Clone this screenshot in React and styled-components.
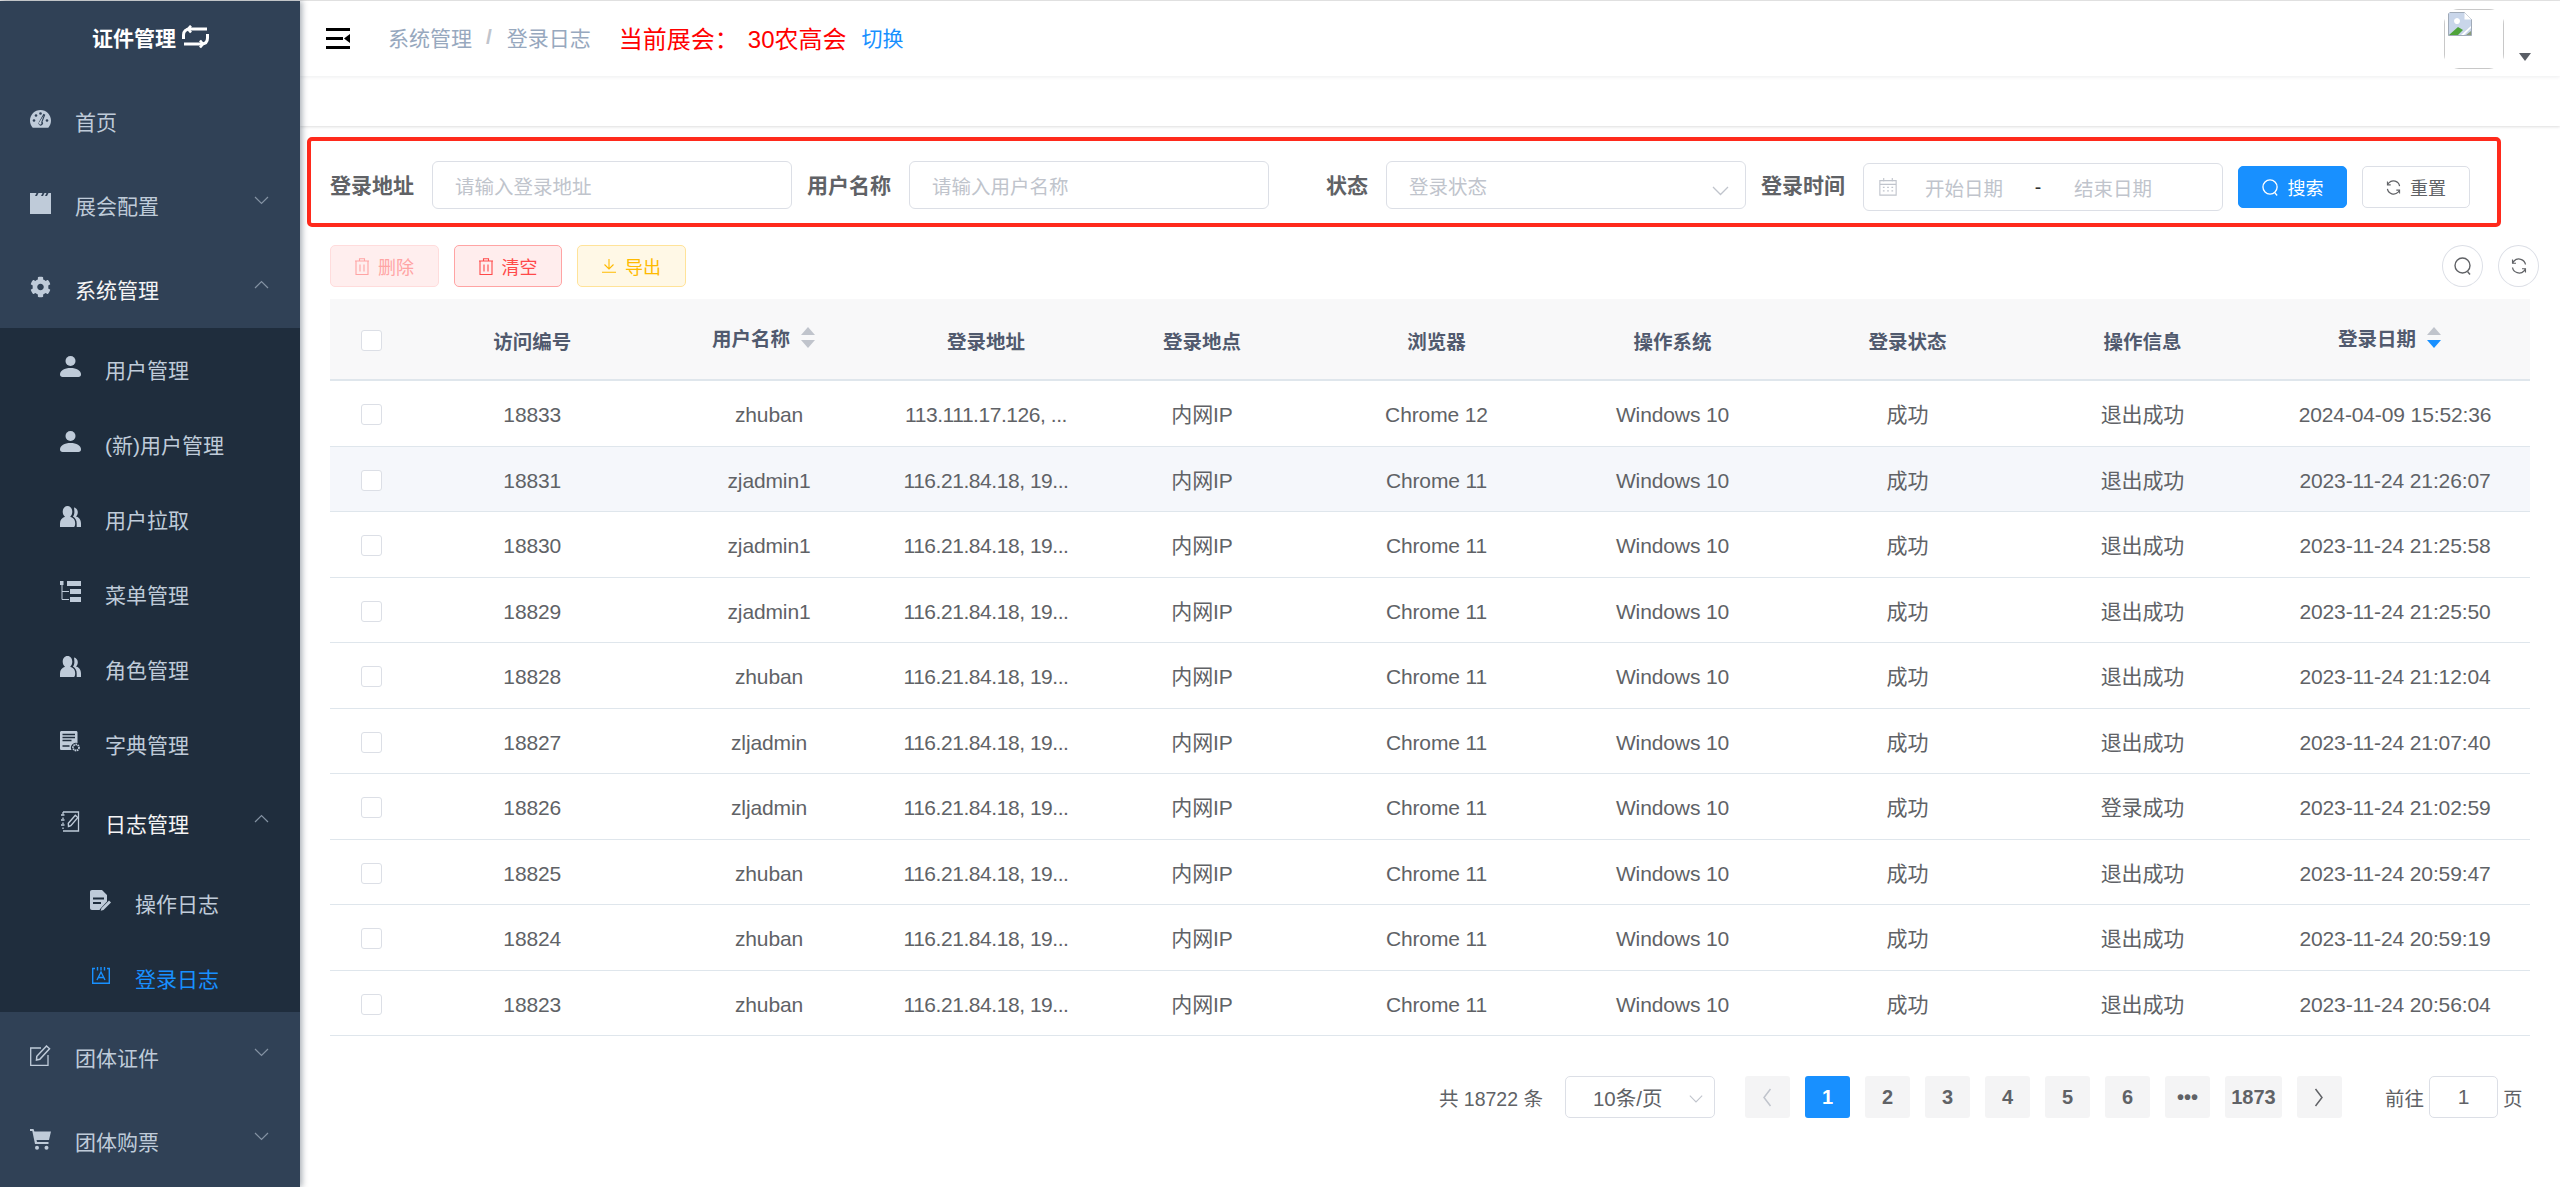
import React from "react";
import styled, { createGlobalStyle } from "styled-components";
import { FaCog } from "react-icons/fa";

const Global = createGlobalStyle`
  html, body { margin: 0; padding: 0; background: #fff; }
  body { font-family: "Liberation Sans", "Noto Sans CJK SC", sans-serif; font-size: 21px; color: #606266; }
  * { box-sizing: border-box; }
`;

const Page = styled.div`
  width: 2560px; height: 1187px; overflow: hidden;
  display: flex; flex-direction: column; background: #fff;
`;
const Hairline = styled.div`height: 1px; background: #e4e4e4; flex: none;`;
const Body = styled.div`display: flex; flex: 1; min-height: 0;`;

/* ---------- sidebar ---------- */
const Sidebar = styled.aside`
  width: 300px; flex: none; background: #304156;
  box-shadow: 2px 0 6px rgba(0, 21, 41, .35); position: relative; z-index: 2;
`;
const Logo = styled.div`
  height: 75px; display: flex; align-items: center; justify-content: center; gap: 6px;
  color: #fff; font-weight: 700; font-size: 21px; padding: 0 0 3px 1px;
`;
const SubMenu = styled.div`background: #1f2d3d;`;
const Item = styled.div`
  height: ${p => (p.$tall ? 84 : 75)}px;
  padding-left: ${p => 30 + p.$level * 30}px; padding-right: 31px;
  display: flex; align-items: center; position: relative;
  color: ${p => (p.$active ? "#1890ff" : p.$open ? "#f4f4f5" : "#bfcbd9")};
`;
const ItemIcon = styled.span`
  width: 21px; height: 21px; flex: none; margin-right: 24px; margin-top: 2px;
  display: flex; align-items: center; justify-content: center;
  color: ${p => (p.$active ? "#1890ff" : "#bfcbd9")};
  svg { display: block; }
`;
const ItemLabel = styled.span`flex: 1; padding-top: 6px; white-space: nowrap;`;
const Chevron = styled.svg`width: 15px; height: 9px; flex: none; margin-top: -4px; color: #8492a3;`;

/* ---------- right side ---------- */
const Main = styled.main`flex: 1; min-width: 0; display: flex; flex-direction: column;`;
const Navbar = styled.header`
  height: 75px; flex: none; display: flex; align-items: center; padding: 0 0 3px 26px;
  box-shadow: 0 1px 4px rgba(0, 21, 41, .08); position: relative; z-index: 1; background: #fff;
`;
const Hamburger = styled.svg`width: 24px; height: 21px; flex: none; margin: 3px 38px 0 0;`;
const Crumb = styled.span`color: #97a8be; white-space: nowrap;`;
const CrumbSep = styled.span`color: #c0c4cc; font-weight: 700; margin: 0 15px 0 14px;`;
const Exhibition = styled.span`color: #f00; font-size: 24px; margin-left: 28px; white-space: nowrap;`;
const ExhibitionName = styled.span`margin-left: 9px;`;
const SwitchLink = styled.span`color: #1890ff; margin-left: 15px; white-space: nowrap;`;
const NavRight = styled.div`margin-left: auto; display: flex; align-items: flex-start; padding-right: 29px; align-self: stretch; padding-top: 8px;`;
const Avatar = styled.div`width: 60px; height: 60px; border-radius: 15px; overflow: hidden; background: #fff;`;
const AvatarInner = styled.div`width: 100%; height: 100%; border: 1px solid #c8c8c8; padding: 2px 0 0 3px;`;
const Caret = styled.span`
  width: 0; height: 0; margin: 44px 0 0 15px;
  border-left: 6px solid transparent; border-right: 6px solid transparent; border-top: 8px solid #5a5e66;
`;
const TagsBar = styled.div`
  height: 50px; flex: none; background: #fff;
  box-shadow: 0 1px 3px 0 rgba(0, 0, 0, .12), 0 0 3px 0 rgba(0, 0, 0, .04);
`;

const SearchBox = styled.form`
  width: 2194px; height: 90px; margin: 11px 0 0 7px; flex: none;
  border: 4px solid #ff2a1c; border-radius: 5px;
  padding: 20px 0 0 19px; display: flex; align-items: flex-start;
`;
const FieldLabel = styled.label`
  width: 102px; flex: none; padding-right: 18px; text-align: right; margin-top: 1px;
  font-weight: 700; line-height: 48px; color: #606266; white-space: nowrap;
`;
const Field = styled.div`
  width: 360px; height: 48px; flex: none; margin-right: 15px; margin-top: ${p => p.$top || 0}px;
  border: 1px solid #dcdfe6; border-radius: 6px; padding: 0 22px; font-size: 19.5px;
  display: flex; align-items: center; color: #c0c4cc; position: relative; white-space: nowrap;
`;
const SelectArrow = styled.svg`position: absolute; right: 16px; top: 24px; width: 17px; height: 10px; color: #c0c4cc;`;
const CalIcon = styled.svg`width: 18px; height: 18px; flex: none; margin-left: -7px; color: #c0c4cc;`;
const RangeText = styled.span`width: 78px; margin-left: ${p => p.$ml}px; text-align: center;`;
const RangeDash = styled.span`color: #303133; width: 30px; text-align: center; margin: 0 21px 0 20px;`;
const Btn = styled.button`
  height: 42px; width: ${p => p.$w}px; flex: none; padding: 0;
  border: 1px solid ${p => p.$border}; border-radius: 5px;
  background: ${p => p.$bg}; color: ${p => p.$fg};
  font: inherit; font-size: 18px; display: inline-flex; align-items: center; justify-content: center; gap: 9px;
  svg { display: block; }
`;
const SearchBtnWrap = styled.div`display: flex; gap: 15px; margin-top: 5px;`;

const Toolbar = styled.div`
  height: 42px; margin: 18px 21px 12px 30px; flex: none;
  display: flex; justify-content: space-between;
`;
const ToolGroup = styled.div`display: flex; gap: 15px;`;
const CircleBtn = styled.button`
  width: 41px; height: 42px; border-radius: 50%; padding: 0; background: #fff;
  border: 1px solid #dcdfe6; color: #606266;
  display: flex; align-items: center; justify-content: center;
`;
const Table = styled.table`
  width: 2200px; margin-left: 30px; flex: none; table-layout: fixed; border-collapse: separate; border-spacing: 0;
`;
const Th = styled.th`
  height: 82px; padding: 2px 0 0; background: #f8f8f9; border-bottom: 2px solid #dfe6ec;
  color: #515a6e; font-weight: 700; font-size: 19.5px; text-align: center; white-space: nowrap;
`;
const Td = styled.td`
  height: 65.5px; padding: 3px 0 0; border-bottom: 1.5px solid #dfe6ec; text-align: center; white-space: nowrap;
  background: ${p => (p.$hover ? "#f5f7fb" : "#fff")}; color: #606266; overflow: hidden;
  line-height: 21px; letter-spacing: ${p => (p.$tight ? "-0.45px" : "-0.12px")};
`;
const Check = styled.span`
  display: block; width: 21px; height: 21px; margin: 0 auto 0 31px; background: #fff;
  border: 1px solid #dcdfe6; border-radius: 3px;
`;
const SortWrap = styled.span`display: inline-flex; align-items: center; transform: translateY(-3px);`;
const SortArrows = styled.span`width: 36px; display: inline-flex; flex-direction: column; align-items: center; gap: 5px;`;
const ArrowUp = styled.i`
  width: 0; height: 0; border-left: 7px solid transparent; border-right: 7px solid transparent;
  border-bottom: 8px solid #c0c4cc;
`;
const ArrowDown = styled.i`
  width: 0; height: 0; border-left: 7px solid transparent; border-right: 7px solid transparent;
  border-top: 8px solid ${p => (p.$on ? "#1890ff" : "#c0c4cc")};
`;

const Pager = styled.div`
  height: 42px; margin: 40px 37.5px 0 0; flex: none; display: flex; align-items: center; justify-content: flex-end;
  white-space: nowrap; font-size: 19.5px;
`;
const Total = styled.span`margin-right: 22px;`;
const PageSize = styled.div`
  width: 150px; height: 42px; margin-right: 30px; border: 1px solid #dcdfe6; border-radius: 5px; position: relative;
  display: flex; align-items: center; padding-left: 27px; color: #606266; font-size: 20.5px;
`;
const PageBtn = styled.span`
  min-width: ${p => p.$w || 45}px; height: 42px; margin-right: 15px; border-radius: 3px;
  background: ${p => (p.$on ? "#1890ff" : "#f4f4f5")}; color: ${p => (p.$on ? "#fff" : "#606266")};
  font-weight: 700; font-size: 20px;
  display: flex; align-items: center; justify-content: center;
`;
const Jump = styled.span`margin-left: 28px;`;
const JumpInput = styled.div`
  width: 69px; height: 42px; margin: 0 5px; border: 1px solid #dcdfe6; border-radius: 5px; font-size: 21px;
  display: flex; align-items: center; justify-content: center;
`;

/* ---------- icons ---------- */
const Gauge = () => (
  <svg width="21" height="18" viewBox="0 0 21 18">
    <path fill="currentColor" d="M10.5 0C4.7 0 0 4.700 0 10.500c0 2.700.9 5 2.300 6.700.3.400.7.600 1.200.6h14c.5 0 .9-.2 1.200-.6C20.100 15.500 21 13.200 21 10.500 21 4.700 16.300 0 10.500 0z" />
    <g fill="#304156">
      <circle cx="4" cy="10.500" r="1.300" /><circle cx="6" cy="5.500" r="1.300" /><circle cx="10.500" cy="3.500" r="1.300" /><circle cx="17" cy="10.500" r="1.300" />
      <path d="M13.500 3.800l1.800.9-2.800 7a2.300 2.300 0 1 1-3.600.2z" />
    </g>
    <path fill="currentColor" d="M13.800 5.300l-2.600 7a1.300 1.300 0 1 1-1.800-.2z" />
  </svg>
);
const Clapper = () => (
  <svg width="21" height="22" viewBox="0 0 21 22">
    <path fill="currentColor" d="M0 1h6.500L5 4h2l1.500-3h4L11 4h2l1.500-3h2L15 4h2l1.500-3H21v21H0z" />
  </svg>
);
const User = () => (
  <svg width="21" height="21" viewBox="0 0 21 21">
    <circle cx="10.500" cy="5" r="5" fill="currentColor" />
    <path fill="currentColor" d="M0 18.500C0 14.500 4.500 12 10.500 12S21 14.500 21 18.500c0 1.500-1 2.500-2.500 2.500h-16C1 21 0 20 0 18.500z" />
  </svg>
);
const Users = () => (
  <svg width="21" height="21" viewBox="0 0 21 21">
    <path fill="currentColor" d="M7.500 0c3 0 4.800 2.600 4.800 5.800 0 2.200-.9 3.900-2.100 5 3.300 1 5 3 5 6.500 0 1-.3 3.700-1.200 3.700H0v-3.500c0-3.500 1.900-5.700 5-6.700-1.300-1.100-2.300-2.800-2.300-5C2.700 2.600 4.500 0 7.500 0z" />
    <path fill="currentColor" d="M14 1.500c2.300.5 3.800 2.400 3.800 4.800 0 1.700-.7 3.200-1.900 4.300 3 .8 5.100 3 5.100 7v3.400h-4.300v-3.500c0-3-1.300-5.400-3.800-7 .9-1.200 1.500-2.800 1.500-4.600 0-1.500-.2-3-.4-4.400z" />
  </svg>
);
const Tree = () => (
  <svg width="21" height="21" viewBox="0 0 21 21">
    <path fill="currentColor" d="M0 0h3.500v4H0zM7 0h14v5H7zM10 8h11v5H10zM10 16h11v5H10z" />
    <path fill="none" stroke="currentColor" strokeWidth="1" d="M2 4v14.500h7M2 10.500h7" />
  </svg>
);
const Dict = () => (
  <svg width="21" height="21" viewBox="0 0 21 21">
    <path fill="currentColor" d="M1.500 0H16c1 0 1.500.6 1.500 1.500V12a5 5 0 0 0-6 7H1.500C.6 19 0 18.500 0 17.500v-16C0 .6.600 0 1.500 0z" />
    <path fill="none" stroke="#1f2d3d" strokeWidth="1.300" d="M2.500 3.500h12.500M2.500 6.500h12.500M2.500 9.500h9M2.500 15h7" />
    <circle cx="16" cy="16.500" r="3" fill="none" stroke="currentColor" strokeWidth="1.800" strokeDasharray="1.600 .6" />
  </svg>
);
const NoteLog = () => (
  <svg width="19" height="21" viewBox="0 0 19 21" fill="none" stroke="currentColor">
    <path strokeWidth="1.300" d="M2 1h15.500v19H2M2 3.500V1M2 8V6.500M2 13v-1.500M2 18v-1.500" />
    <path strokeWidth="1.300" d="M0 4h3.500M0 9h3.500M0 14h3.500" />
    <path fill="#1f2d3d" strokeWidth="1.400" d="M7.500 15.500l-.2-3.200 7-8 2.500 2.300-7 8z" />
  </svg>
);
const SquareEdit = () => (
  <svg width="21" height="21" viewBox="0 0 21 21" fill="none" stroke="currentColor" strokeWidth="1.300">
    <path d="M11 3H.7v17.300H18V10" />
    <path fill="#304156" strokeWidth="1.500" d="M6.500 15l.3-3.800L16.500 1l3 2.700-9.700 10.500z" />
  </svg>
);
const Cart = () => (
  <svg width="21" height="21" viewBox="0 0 21 21">
    <path fill="currentColor" d="M0 0h3.500l.9 2.500H21l-2 8.500H6.500l.5 2H18.500v2H5L2.300 2H0z" />
    <circle cx="7" cy="18.800" r="2" fill="currentColor" /><circle cx="16.500" cy="18.800" r="2" fill="currentColor" />
  </svg>
);
const DocEdit = () => (
  <svg width="21" height="21" viewBox="0 0 21 21">
    <path fill="currentColor" d="M2 0h10l5 5v6.500l-6.500 7L9.500 20H2c-1.200 0-2-.8-2-2V2C0 .8.800 0 2 0z" />
    <path fill="#1f2d3d" d="M3 7.500h11v2H3zM3 12h8v2H3z" />
    <path fill="currentColor" d="M19 10.500l2 2-7.500 7.500-2.800.8.800-2.800z" />
  </svg>
);
const LoginLog = () => (
  <svg width="18" height="17" viewBox="0 0 18 17" fill="none" stroke="currentColor" strokeWidth="1.400">
    <path d="M3 1.500H.7v14.800h16.600V1.500H15" />
    <path d="M5.500 0v3.500M9 0v3.500M12.500 0v3.500" />
    <path d="M5 13l4-8 4 8M6.500 10.500h5" />
  </svg>
);
const Swap = () => (
  <svg width="27" height="24" viewBox="0 0 27 24" fill="none" stroke="#fff" strokeWidth="3">
    <path d="M25 4H8C4 4 1.500 6.500 1.500 10v4" />
    <path d="M9 .8L6 4l3 3.500" strokeWidth="2.600" />
    <path d="M2 19h17c4 0 6.500-2 6.500-6V9" />
    <path d="M18 15.500l3 3.500-3 3.500" strokeWidth="2.600" />
  </svg>
);
const Down = () => (
  <Chevron viewBox="0 0 15 9" fill="none" stroke="currentColor" strokeWidth="1.200"><path d="M1 1l6.500 6.500L14 1" /></Chevron>
);
const Up = () => (
  <Chevron viewBox="0 0 15 9" fill="none" stroke="currentColor" strokeWidth="1.200"><path d="M1 8l6.500-6.500L14 8" /></Chevron>
);
const SearchGlyph = ({ size = 17 }) => (
  <svg width={size} height={size} viewBox="0 0 18 18" fill="none" stroke="currentColor" strokeWidth="1.400">
    <circle cx="8.500" cy="8.500" r="7.500" /><path d="M13.500 14.500l2.500 3" />
  </svg>
);
const RefreshGlyph = ({ size = 15 }) => (
  <svg width={size} height={size} viewBox="0 0 16 16" fill="none" stroke="currentColor" strokeWidth="1.300">
    <path d="M14.500 6.500A6.800 6.800 0 0 0 3 3L1.500 5" /><path d="M1.500 1.500V5.200H5" strokeWidth="1.100" />
    <path d="M1.500 9.500A6.800 6.800 0 0 0 13 13l1.500-2" /><path d="M14.500 14.500v-3.700H11" strokeWidth="1.100" />
  </svg>
);
const Trash = () => (
  <svg width="14" height="17" viewBox="0 0 14 17" fill="none" stroke="currentColor" strokeWidth="1.100">
    <path d="M1 3.500V16.500h12V3.500M0 3h14M4.500 3V.8h5V3M5 6.500v7M9 6.500v7" />
  </svg>
);
const Download = () => (
  <svg width="14" height="14" viewBox="0 0 14 14" fill="none" stroke="currentColor" strokeWidth="1.100">
    <path d="M7 0v10M2.500 5.500L7 10l4.500-4.500M0 13.300h14" />
  </svg>
);
const Calendar = () => (
  <CalIcon viewBox="0 0 21 21" fill="none" stroke="currentColor" strokeWidth="1.300">
    <path d="M1 3h19v17H1zM1 7.500h19M5.500 0v4M15.500 0v4" />
    <path d="M4.500 11h2M9.500 11h2M14.500 11h2M4.500 15h2M9.500 15h2M14.500 15h2" strokeWidth="1.500" />
  </CalIcon>
);
const BrokenImage = () => (
  <svg width="24" height="24" viewBox="0 0 24 24">
    <path fill="#c9d6ea" stroke="#8f9aa8" strokeWidth=".8" d="M.5.5h16l7 7v16H.5z" />
    <path fill="#fff" d="M16.500.5v7h7zM6 9a3 3 0 1 1 0 .1z" />
    <path fill="#4fa33a" d="M1 23l9-8 5 3-5 5z" />
    <path fill="#fff" d="M13 23l10-9v2l-7 7z" />
    <path fill="#8a9c7a" d="M18 23l5-4v4z" />
  </svg>
);
const HamburgerIcon = () => (
  <Hamburger viewBox="0 0 24 21">
    <path fill="#000" d="M0 0h24v3H0zM0 9h17v3H0zM0 18h24v3H0z" />
    <path fill="#000" d="M24 6v9l-6-4.500z" />
  </Hamburger>
);

/* ---------- data ---------- */
const menu = [
  { t: "首页", i: <Gauge /> },
  { t: "展会配置", i: <Clapper />, c: "down" },
  { t: "系统管理", i: <FaCog size={22} />, c: "up", open: true },
];
const subItems = [
  { t: "用户管理", i: <User /> },
  { t: "(新)用户管理", i: <User /> },
  { t: "用户拉取", i: <Users /> },
  { t: "菜单管理", i: <Tree /> },
  { t: "角色管理", i: <Users /> },
  { t: "字典管理", i: <Dict /> },
];
const columns = [82.5, 239.5, 234, 200, 232, 237, 235, 235, 235, 270];
const rows = [
  ["18833", "zhuban", "113.111.17.126, ...", "Chrome 12", "退出成功", "2024-04-09 15:52:36"],
  ["18831", "zjadmin1", "116.21.84.18, 19...", "Chrome 11", "退出成功", "2023-11-24 21:26:07"],
  ["18830", "zjadmin1", "116.21.84.18, 19...", "Chrome 11", "退出成功", "2023-11-24 21:25:58"],
  ["18829", "zjadmin1", "116.21.84.18, 19...", "Chrome 11", "退出成功", "2023-11-24 21:25:50"],
  ["18828", "zhuban", "116.21.84.18, 19...", "Chrome 11", "退出成功", "2023-11-24 21:12:04"],
  ["18827", "zljadmin", "116.21.84.18, 19...", "Chrome 11", "退出成功", "2023-11-24 21:07:40"],
  ["18826", "zljadmin", "116.21.84.18, 19...", "Chrome 11", "登录成功", "2023-11-24 21:02:59"],
  ["18825", "zhuban", "116.21.84.18, 19...", "Chrome 11", "退出成功", "2023-11-24 20:59:47"],
  ["18824", "zhuban", "116.21.84.18, 19...", "Chrome 11", "退出成功", "2023-11-24 20:59:19"],
  ["18823", "zhuban", "116.21.84.18, 19...", "Chrome 11", "退出成功", "2023-11-24 20:56:04"],
];

const Sort = ({ label, on }) => (
  <SortWrap>
    {label}
    <SortArrows><ArrowUp /><ArrowDown $on={on} /></SortArrows>
  </SortWrap>
);

export default function App() {
  return (
    <Page>
      <Global />
      <Hairline />
      <Body>
        <Sidebar>
          <Logo>证件管理<Swap /></Logo>
          {menu.map(m => (
            <Item key={m.t} $level={0} $tall $open={m.open}>
              <ItemIcon>{m.i}</ItemIcon>
              <ItemLabel>{m.t}</ItemLabel>
              {m.c === "down" && <Down />}
              {m.c === "up" && <Up />}
            </Item>
          ))}
          <SubMenu>
            {subItems.map(m => (
              <Item key={m.t} $level={1}>
                <ItemIcon>{m.i}</ItemIcon>
                <ItemLabel>{m.t}</ItemLabel>
              </Item>
            ))}
            <Item $level={1} $tall $open>
              <ItemIcon><NoteLog /></ItemIcon>
              <ItemLabel>日志管理</ItemLabel>
              <Up />
            </Item>
            <Item $level={2}>
              <ItemIcon><DocEdit /></ItemIcon>
              <ItemLabel>操作日志</ItemLabel>
            </Item>
            <Item $level={2} $active>
              <ItemIcon $active><LoginLog /></ItemIcon>
              <ItemLabel>登录日志</ItemLabel>
            </Item>
          </SubMenu>
          <Item $level={0} $tall>
            <ItemIcon><SquareEdit /></ItemIcon>
            <ItemLabel>团体证件</ItemLabel>
            <Down />
          </Item>
          <Item $level={0} $tall>
            <ItemIcon><Cart /></ItemIcon>
            <ItemLabel>团体购票</ItemLabel>
            <Down />
          </Item>
        </Sidebar>

        <Main>
          <Navbar>
            <HamburgerIcon />
            <Crumb>系统管理</Crumb>
            <CrumbSep>/</CrumbSep>
            <Crumb>登录日志</Crumb>
            <Exhibition>当前展会：<ExhibitionName>30农高会</ExhibitionName></Exhibition>
            <SwitchLink>切换</SwitchLink>
            <NavRight>
              <Avatar><AvatarInner><BrokenImage /></AvatarInner></Avatar>
              <Caret />
            </NavRight>
          </Navbar>
          <TagsBar />

          <SearchBox>
            <FieldLabel>登录地址</FieldLabel>
            <Field>请输入登录地址</Field>
            <FieldLabel>用户名称</FieldLabel>
            <Field>请输入用户名称</Field>
            <FieldLabel>状态</FieldLabel>
            <Field>
              登录状态
              <SelectArrow viewBox="0 0 17 10" fill="none" stroke="currentColor" strokeWidth="1.300"><path d="M1 1l7.500 7.500L16 1" /></SelectArrow>
            </Field>
            <FieldLabel>登录时间</FieldLabel>
            <Field $top={2}>
              <Calendar />
              <RangeText $ml={28}>开始日期</RangeText>
              <RangeDash>-</RangeDash>
              <RangeText $ml={0}>结束日期</RangeText>
            </Field>
            <SearchBtnWrap>
              <Btn type="button" $w={109} $bg="#1890ff" $border="#1890ff" $fg="#fff"><SearchGlyph />搜索</Btn>
              <Btn type="button" $w={108} $bg="#fff" $border="#dcdfe6" $fg="#606266"><RefreshGlyph />重置</Btn>
            </SearchBtnWrap>
          </SearchBox>

          <Toolbar>
            <ToolGroup>
              <Btn type="button" $w={109} $bg="#ffeeee" $border="#ffdcdc" $fg="#ffa4a4"><Trash />删除</Btn>
              <Btn type="button" $w={108} $bg="#ffeded" $border="#ffa4a4" $fg="#ff4949"><Trash />清空</Btn>
              <Btn type="button" $w={109} $bg="#fff8e6" $border="#ffe399" $fg="#ffba00"><Download />导出</Btn>
            </ToolGroup>
            <ToolGroup>
              <CircleBtn type="button"><SearchGlyph size={18} /></CircleBtn>
              <CircleBtn type="button"><RefreshGlyph size={16} /></CircleBtn>
            </ToolGroup>
          </Toolbar>

          <Table>
            <colgroup>{columns.map((w, i) => <col key={i} style={{ width: w }} />)}</colgroup>
            <thead>
              <tr>
                <Th><Check /></Th>
                <Th>访问编号</Th>
                <Th><Sort label="用户名称" /></Th>
                <Th>登录地址</Th>
                <Th>登录地点</Th>
                <Th>浏览器</Th>
                <Th>操作系统</Th>
                <Th>登录状态</Th>
                <Th>操作信息</Th>
                <Th><Sort label="登录日期" on /></Th>
              </tr>
            </thead>
            <tbody>
              {rows.map((r, idx) => {
                const h = idx === 1;
                return (
                  <tr key={r[0]}>
                    <Td $hover={h}><Check /></Td>
                    <Td $hover={h}>{r[0]}</Td>
                    <Td $hover={h}>{r[1]}</Td>
                    <Td $hover={h} $tight>{r[2]}</Td>
                    <Td $hover={h}>内网IP</Td>
                    <Td $hover={h}>{r[3]}</Td>
                    <Td $hover={h}>Windows 10</Td>
                    <Td $hover={h}>成功</Td>
                    <Td $hover={h}>{r[4]}</Td>
                    <Td $hover={h}>{r[5]}</Td>
                  </tr>
                );
              })}
            </tbody>
          </Table>

          <Pager>
            <Total>共 18722 条</Total>
            <PageSize>
              10条/页
              <SelectArrow viewBox="0 0 17 10" fill="none" stroke="currentColor" strokeWidth="1.300" style={{ top: 17, width: 14, right: 11 }}><path d="M1 1l7.500 7.500L16 1" /></SelectArrow>
            </PageSize>
            <PageBtn><svg width="10" height="21" viewBox="0 0 10 21" fill="none" stroke="#c0c4cc" strokeWidth="1.500"><path d="M8.500 2L2 10.500 8.500 19" /></svg></PageBtn>
            <PageBtn $on>1</PageBtn>
            <PageBtn>2</PageBtn>
            <PageBtn>3</PageBtn>
            <PageBtn>4</PageBtn>
            <PageBtn>5</PageBtn>
            <PageBtn>6</PageBtn>
            <PageBtn>•••</PageBtn>
            <PageBtn $w={57}>1873</PageBtn>
            <PageBtn><svg width="10" height="21" viewBox="0 0 10 21" fill="none" stroke="#606266" strokeWidth="1.500"><path d="M1.500 2L8 10.500 1.500 19" /></svg></PageBtn>
            <Jump>前往</Jump>
            <JumpInput>1</JumpInput>
            <span>页</span>
          </Pager>
        </Main>
      </Body>
    </Page>
  );
}
